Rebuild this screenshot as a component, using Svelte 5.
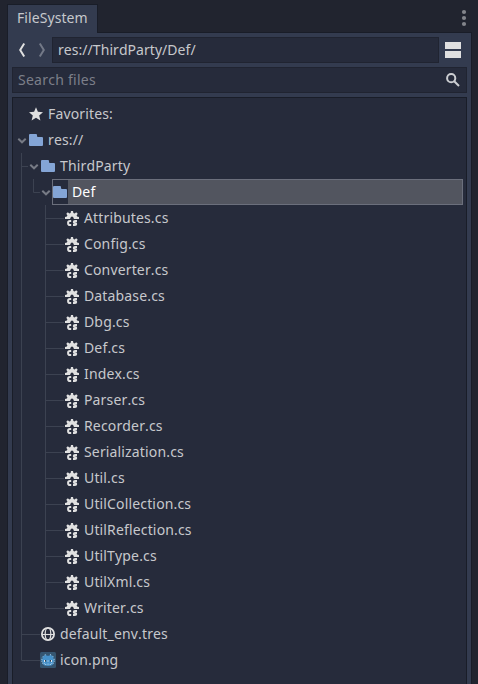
<script>
  const scripts = ['Attributes', 'Config', 'Converter', 'Database', 'Dbg', 'Def', 'Index', 'Parser', 'Recorder',
    'Serialization', 'Util', 'UtilCollection', 'UtilReflection', 'UtilType', 'UtilXml', 'Writer'];

  // indent: left edge of the icon inside the tree; guides: SVG path of the branch lines
  const rows = [
    { name: 'Favorites:', icon: 'star', indent: 15, guides: '' },
    { name: 'res://', icon: 'folder', indent: 15, open: true, guides: '' },
    { name: 'ThirdParty', icon: 'folder', indent: 27, open: true, guides: 'M8.5 0V26M8 13.5H15' },
    { name: 'Def', icon: 'folder', indent: 39, open: true, selected: true, guides: 'M8.5 0V26M20.5 0V13.5H27' },
    ...scripts.map((s, i) => ({
      name: s + '.cs',
      icon: 'csharp',
      indent: 51,
      guides: 'M8.5 0V26' + (i === scripts.length - 1 ? 'M32.5 0V13.5H51' : 'M32.5 0V26M32 13.5H51')
    })),
    { name: 'default_env.tres', icon: 'globe', indent: 27, guides: 'M8.5 0V26M8 13.5H27' },
    { name: 'icon.png', icon: 'godot', indent: 27, guides: 'M8.5 0V13.5H27' }
  ];
</script>

{#snippet icon(kind)}
  <svg class="icon" width="16" height="16" viewBox="0 0 16 16">
    {#if kind === 'star'}
      <path fill="#e0e0e0" d="M8 1.2L9.9 5.7L15 6.2L11.2 9.5L12.4 14.4L8 11.8L3.6 14.4L4.8 9.5L1 6.2L6.1 5.7Z" />
    {:else if kind === 'folder'}
      <path fill="#84a5d6" d="M2 2a1 1 0 0 0-1 1v10a1 1 0 0 0 1 1h12a1 1 0 0 0 1-1V6a1 1 0 0 0-1-1h-4a1 1 0 0 1-1-1V3a1 1 0 0 0-1-1z" />
    {:else if kind === 'csharp'}
      <path fill="#e0e0e0" d="M7 1L6.6 2.9A5 5 0 0 0 5.4 3.4L3.8 2.3L2.3 3.8L3.4 5.4A5 5 0 0 0 2.9 6.6L1 7V9H6.2A2 2 0 0 1 6.9 7.2A1.3 1.3 0 0 1 9.1 7.2A2 2 0 0 1 9.8 9H15V7L13.1 6.6A5 5 0 0 0 12.6 5.4L13.7 3.8L12.2 2.3L10.6 3.4A5 5 0 0 0 9.4 2.9L9 1Z" />
      <path fill="none" stroke="#e0e0e0" stroke-width="2" d="M7.2 11H6Q4.1 11 4.1 12.5V13.2Q4.1 15 6 15H7.2M13 11H11Q9.8 11 9.8 11.9Q9.8 12.8 11 13Q12.2 13.1 12.2 14Q12.2 15 11 15H9" />
    {:else if kind === 'globe'}
      <g fill="none" stroke="#e0e0e0">
        <circle cx="8" cy="8" r="6.1" stroke-width="1.8" />
        <path stroke-width="1.1" d="M2 8.5H14" />
        <ellipse cx="8" cy="8" rx="2.8" ry="6" stroke-width="1.2" />
      </g>
    {:else}
      <rect width="16" height="16" rx="1.5" fill="#355570" />
      <path fill="#4691c9" d="M6 2.5L6.6 3.8H9.4L10 2.5L11.5 3V4.2L12.4 3.7L13.7 5L13.2 6.2V6.8L14.3 6.5V9.5H13.5V12Q12 14 8 14T2.5 12V9.5H1.7V6.5L2.8 6.8V6.2L2.3 5L3.6 3.7L4.5 4.2V3Z" />
      <path fill="none" stroke="#b9d5e9" stroke-width=".8" stroke-dasharray="1.1 .9" d="M2.2 11.2H4.6V12.5H7V12H9V12.5H11.4V11.2H14M4.6 3L6 2.5M10 2.5L11.4 3M2.2 5.3L3.6 3.9M12.4 3.9L13.8 5.3M1.8 6.8V9.8M14.2 6.8V9.8" />
      <path fill="#dce9f2" d="M4 8h1v2H4zM11 8h1v2h-1zM7.6 8.3h.8v1.4h-.8z" />
      <path fill="#333c46" d="M5 8h1v1.6H5zM10 8h1v1.6h-1z" />
    {/if}
  </svg>
{/snippet}

<div class="dock">
  <header>
    <div class="tab">FileSystem</div>
    <svg class="menu" width="6" height="18" viewBox="0 0 6 18" fill="#83858b">
      <circle cx="3" cy="3" r="2.1" /><circle cx="3" cy="9" r="2.1" /><circle cx="3" cy="15" r="2.1" />
    </svg>
  </header>
  <main>
    <div class="nav">
      <svg width="40" height="26" viewBox="0 0 40 26" fill="none" stroke-width="2">
        <path stroke="#e0e0e0" d="M12.2 6.5L8.2 13L12.2 19.5" />
        <path stroke="#737987" d="M27.8 6.5L31.8 13L27.8 19.5" />
      </svg>
      <div class="field path">res://ThirdParty/Def/</div>
      <svg class="split" width="16" height="16"><path fill="#e0e0e0" d="M0 0h16v7H0zM0 9h16v7H0z" /></svg>
    </div>
    <div class="field search">
      <span>Search files</span>
      <svg width="16" height="16" viewBox="0 0 16 16" fill="none" stroke="#ccced2">
        <circle cx="6.2" cy="6.2" r="4.1" stroke-width="2" /><path stroke-width="2" d="M9.2 9.2L14 14" />
      </svg>
    </div>
    <div class="tree">
      {#each rows as row}
        <div class="row">
          <svg class="guides" width={row.indent} height="26">
            <path d={row.guides} fill="none" stroke="#3c4251" />
            {#if row.open}
              <path transform="translate({row.indent - 10} 0)" d="M.3 11.8L4 15.3L7.7 11.8" fill="none" stroke="#777b85" stroke-width="2" />
            {/if}
          </svg>
          <div class="item" class:selected={row.selected}>
            {@render icon(row.icon)}
            <span>{row.name}</span>
          </div>
        </div>
      {/each}
    </div>
  </main>
</div>

<style>
  :global(body) { background: #21242f; }
  .dock {
    box-sizing: border-box;
    height: 684px;
    padding: 4px 6px 0 7px;
    display: flex;
    flex-direction: column;
    overflow: hidden;
    font: 14px/26px "Noto Sans", sans-serif;
    font-kerning: none;
    letter-spacing: 0.08px;
    color: #c6c8cc;
  }
  header { display: flex; justify-content: space-between; height: 28px; }
  .tab {
    box-sizing: border-box;
    width: 91px;
    height: 29px;
    padding-left: 9px;
    border: 1px solid #191d28;
    border-bottom: 0;
    background: #333b4f;
    z-index: 1;
  }
  .menu { margin: 5px 5px 0 0; }
  main {
    box-sizing: border-box;
    flex: 1;
    min-height: 0;
    padding: 4px 4px 0;
    border: 1px solid #191d28;
    border-bottom: 0;
    background: #333b4f;
    display: flex;
    flex-direction: column;
    gap: 4px;
  }
  .nav { display: flex; align-items: center; height: 26px; }
  .field {
    box-sizing: border-box;
    height: 26px;
    padding: 0 5px;
    border: 1px solid #202431;
    background: #262b3b;
    line-height: 24px;
  }
  .path { flex: 1; letter-spacing: 0.05px; }
  .split { margin: 0 6px; }
  .search { flex: none; display: flex; align-items: center; justify-content: space-between; padding-right: 5px; color: #7c7f89; letter-spacing: 0.25px; }
  .tree {
    flex: 1;
    min-height: 0;
    padding: 3px 3px 0 0;
    border: 1px solid #191d28;
    border-bottom: 0;
    background: #262b3b;
    letter-spacing: 0.15px;
  }
  .row { display: flex; height: 26px; }
  .guides { flex: none; }
  .item { flex: 1; display: flex; align-items: center; gap: 4px; }
  .item span { white-space: pre; }
  .icon { flex: none; }
  .selected {
    box-sizing: border-box;
    color: #fff;
    background: linear-gradient(90deg, #262b3b 16px, #52555f 16px);
    box-shadow: inset 0 0 0 1px #6b6f7c;
  }
</style>
